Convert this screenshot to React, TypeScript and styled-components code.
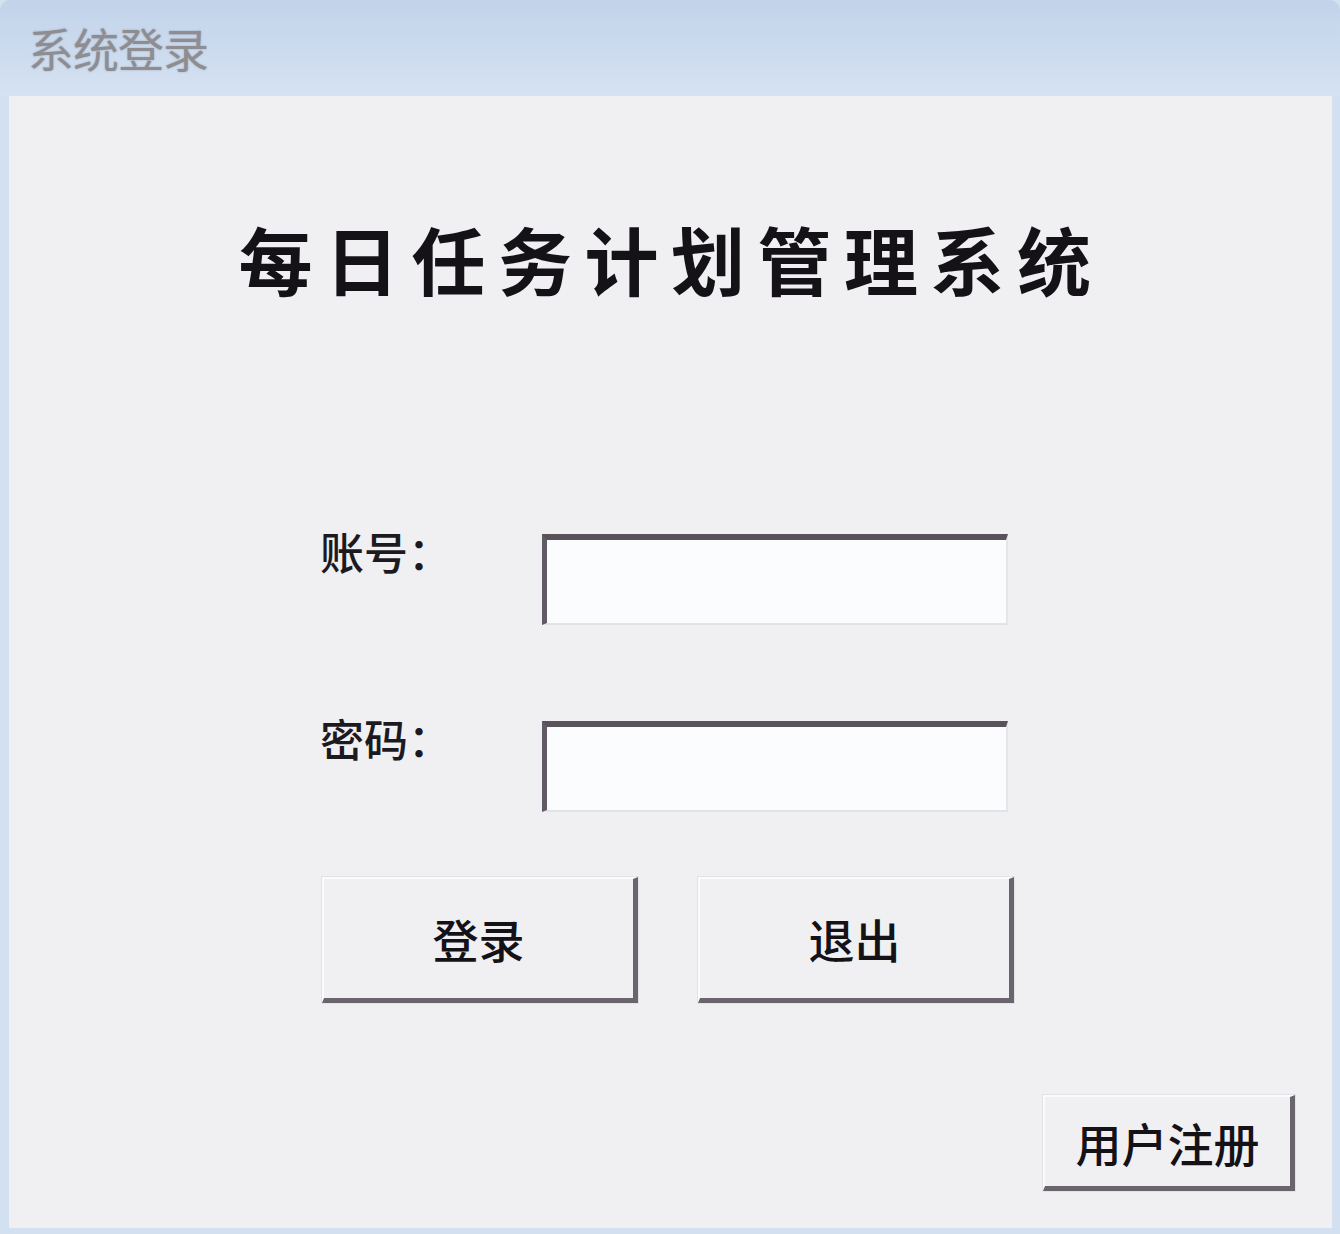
import React from "react";
import styled, { createGlobalStyle } from "styled-components";

const Global = createGlobalStyle`
  html, body { margin: 0; padding: 0; }
  body {
    width: 1340px;
    height: 1234px;
    overflow: hidden;
    font-family: "Noto Sans CJK SC", "Noto Sans", sans-serif;
    background: #d4e1f1;
  }
`;

const Window = styled.div`
  width: 1340px;
  height: 1234px;
  box-sizing: border-box;
  display: flex;
  flex-direction: column;
  background: #d3e0f0;
  padding: 0 8px 6px 9px;
  border-radius: 10px 10px 0 0;
`;

const TitleBar = styled.div`
  height: 96px;
  flex: none;
  display: flex;
  align-items: center;
  margin: 0 -8px 0 -9px;
  padding-left: 28px;
  background: linear-gradient(#c2d3ea, #d5e2f2);
  border-radius: 10px 10px 0 0;
`;

const TitleText = styled.span`
  font-size: 46px;
  line-height: 1;
  color: #8e8e92;
  letter-spacing: -1px;
  text-shadow: 0 0 2px rgba(120, 120, 130, 0.5);
  margin-top: -2px;
`;

const Body = styled.div`
  flex: 1;
  background: #f0f0f3;
  display: flex;
  flex-direction: column;
  padding-top: 118px;
  padding-right: 37px;
  padding-bottom: 37px;
`;

const Heading = styled.h1`
  margin: 0;
  text-align: center;
  font-family: "Noto Sans CJK SC", sans-serif;
  font-size: 74px;
  font-weight: 700;
  line-height: 1.2;
  letter-spacing: 12.5px;
  color: #141216;
  padding-left: 38px;
`;

const Form = styled.div`
  margin-top: 231px;
  margin-left: 311px;
  display: grid;
  grid-template-columns: 222px 466px;
  row-gap: 96px;
`;

const Label = styled.label`
  font-size: 44px;
  font-weight: 500;
  line-height: 46px;
  color: #1c1a1e;
  margin-top: -6px;
`;

const Input = styled.input`
  box-sizing: border-box;
  width: 466px;
  height: 91px;
  margin: 0;
  background: #fbfcfe;
  border-style: solid;
  border-width: 6px 2px 2px 5px;
  border-color: #5a525a #e4e6ea #e0e3e8 #625a66;
  outline: none;
  font-size: 36px;
  padding: 0 12px;
`;

const ButtonRow = styled.div`
  margin-top: 65px;
  margin-left: 313px;
  display: flex;
  gap: 60px;
`;

const Button = styled.button<{ $w: number; $h: number; $fs: number }>`
  box-sizing: border-box;
  width: ${(p) => p.$w}px;
  height: ${(p) => p.$h}px;
  margin: 0;
  padding: 0;
  background: #f0f0f3;
  border-style: solid;
  border-width: 2px 5px 5px 2px;
  border-color: #fbfbfc #6a646c #6a646c #fbfbfc;
  box-shadow: 0 0 0 1px #e2e3e8;
  font-family: "Noto Sans CJK SC", sans-serif;
  font-size: ${(p) => p.$fs}px;
  font-weight: 500;
  color: #141216;
  display: flex;
  align-items: center;
  justify-content: center;
  cursor: pointer;
`;

const Footer = styled.div`
  margin-top: auto;
  display: flex;
  justify-content: flex-end;
`;

export default function App() {
  return (
    <>
      <Global />
      <Window>
        <TitleBar>
          <TitleText>系统登录</TitleText>
        </TitleBar>
        <Body>
          <Heading>每日任务计划管理系统</Heading>
          <Form>
            <Label>账号：</Label>
            <Input type="text" />
            <Label>密码：</Label>
            <Input type="password" />
          </Form>
          <ButtonRow>
            <Button $w={316} $h={126} $fs={46}>登录</Button>
            <Button $w={316} $h={126} $fs={46}>退出</Button>
          </ButtonRow>
          <Footer>
            <Button $w={252} $h={96} $fs={46}>用户注册</Button>
          </Footer>
        </Body>
      </Window>
    </>
  );
}
